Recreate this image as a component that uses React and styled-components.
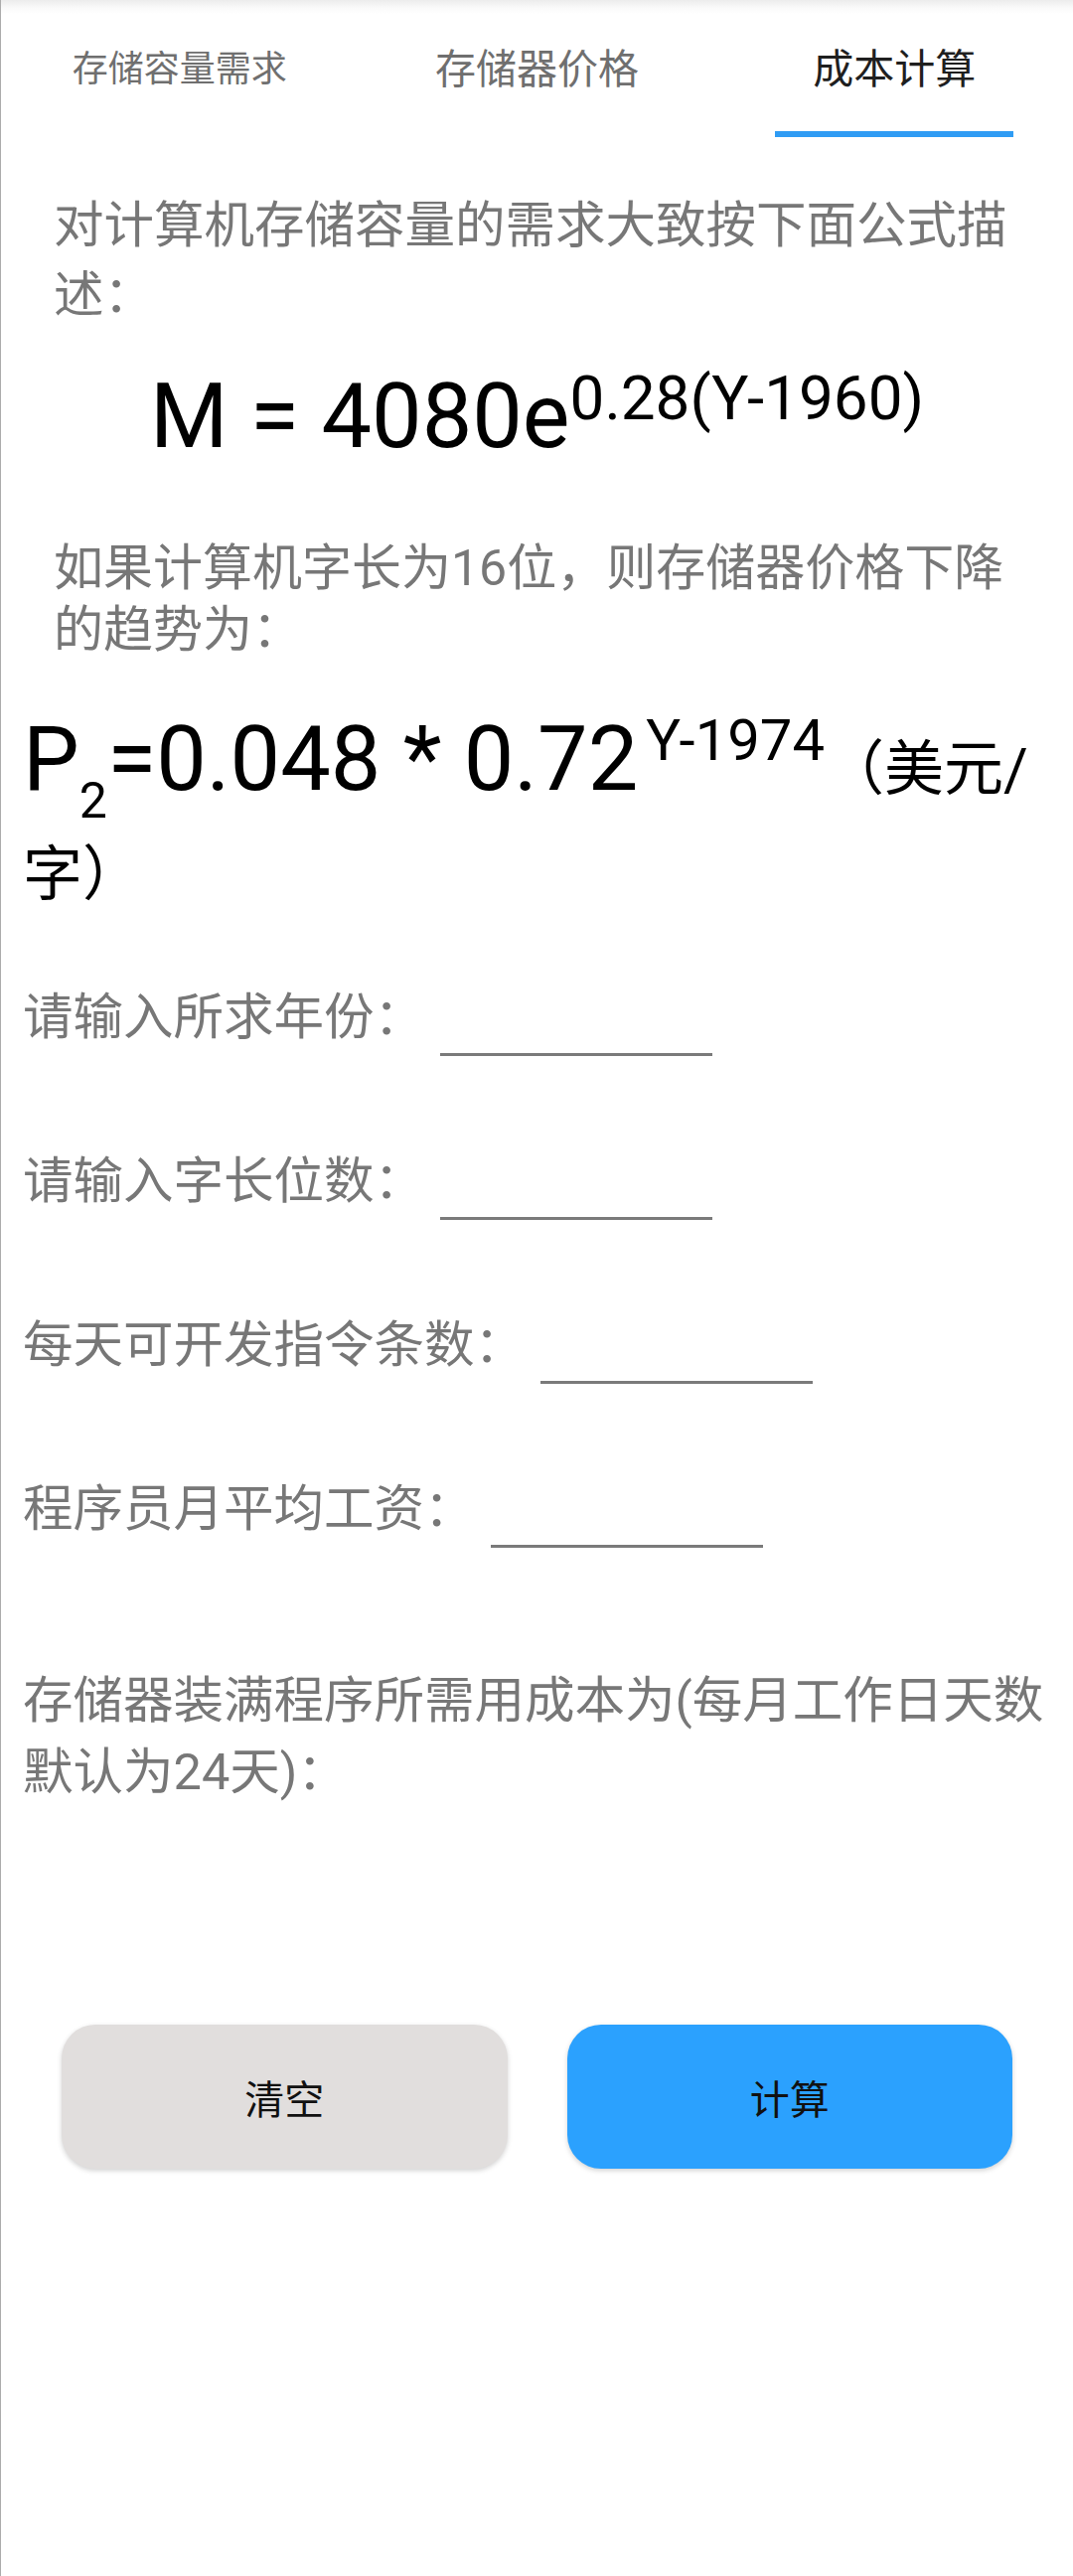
import React from 'react';
import styled, { createGlobalStyle } from 'styled-components';

const GlobalStyle = createGlobalStyle`
  html, body {
    margin: 0;
    padding: 0;
    background: #fff;
  }
  body {
    font-family: Roboto, "Noto Sans CJK SC", sans-serif;
  }
`;

// 页面外框
const Page = styled.div`
  width: 1080px;
  min-height: 2593px;
  box-sizing: border-box;
  border-left: 1px solid #acacac;
  background: #fff;
`;

// 顶部选项卡
const TabBar = styled.div`
  display: grid;
  grid-template-columns: repeat(3, 1fr);
  height: 138px;
  background: linear-gradient(to bottom, #ececec 0, #fafafa 8px, #fff 14px);
`;

const Tab = styled.div`
  display: flex;
  flex-direction: column;
  align-items: center;
`;

const TabLabel = styled.div`
  flex: 1;
  display: flex;
  align-items: center;
  font-size: ${p => p.$size}px;
  color: ${p => (p.$active ? '#1f1f1f' : '#6f6f6f')};
`;

const Indicator = styled.div`
  width: 240px;
  height: 6px;
  background: ${p => (p.$active ? '#2f9cf4' : 'transparent')};
`;

// 说明文字部分
const Intro = styled.div`
  padding: 0 53px;
`;

const Paragraph = styled.p`
  margin: ${p => p.$top}px 0 0;
  font-size: ${p => p.$size}px;
  line-height: ${p => p.$line}px;
  color: #777;
`;

const Formula = styled.div`
  margin-top: 33px;
  text-align: center;
  font-size: 90px;
  line-height: 110px;
  color: #000;
`;

const Sup = styled.span`
  font-size: ${p => p.$size}px;
  vertical-align: ${p => p.$shift}px;
  margin-left: ${p => p.$gap || 0}px;
  line-height: 0;
`;

// 下半部分
const Lower = styled.div`
  padding: 0 20px 0 22px;
`;

const PriceFormula = styled.div`
  margin-top: 47px;
  font-size: 60px;
  line-height: 106px;
  color: #000;
`;

const Big = styled.span`
  font-size: 90px;
`;

const Fields = styled.div`
  margin-top: 60px;
  display: flex;
  flex-direction: column;
  gap: 96px;
`;

const Row = styled.div`
  display: flex;
  align-items: flex-start;
  gap: 16px;
`;

const Label = styled.span`
  font-size: 50.5px;
  line-height: 60px;
  color: #777;
  white-space: nowrap;
`;

const Input = styled.input`
  width: 274px;
  height: 69px;
  box-sizing: border-box;
  border: none;
  border-bottom: 3px solid #7a7a7a;
  background: transparent;
  outline: none;
  font-size: 50px;
  font-family: inherit;
  padding: 0 8px;
`;

const ButtonRow = styled.div`
  margin-top: 218px;
  padding: 0 61px;
  display: flex;
  gap: 60px;
`;

const Button = styled.button`
  flex: 1;
  height: 145px;
  border: none;
  border-radius: 34px;
  background: ${p => (p.$primary ? '#2ba1fe' : '#e1dedd')};
  box-shadow: 0 2px 5px rgba(0, 0, 0, 0.18);
  font-family: Roboto, "Noto Sans CJK SC", sans-serif;
  font-size: 40px;
  color: #111;
`;

const tabs = [
  { label: '存储容量需求', size: 36 },
  { label: '存储器价格', size: 41 },
  { label: '成本计算', size: 41, active: true },
];

const fields = ['请输入所求年份：', '请输入字长位数：', '每天可开发指令条数：', '程序员月平均工资：'];

export default function App() {
  return (
    <>
      <GlobalStyle />
      <Page>
        <TabBar>
          {tabs.map(t => (
            <Tab key={t.label}>
              <TabLabel $size={t.size} $active={t.active}>{t.label}</TabLabel>
              <Indicator $active={t.active} />
            </Tab>
          ))}
        </TabBar>

        <Intro>
          <Paragraph $top={54} $size={50.5} $line={70}>
            对计算机存储容量的需求大致按下面公式描述：
          </Paragraph>
          <Formula>
            M = 4080e<Sup $size={62} $shift={28}>0.28(Y-1960)</Sup>
          </Formula>
          <Paragraph $top={66} $size={50} $line={62}>
            如果计算机字长为16位，则存储器价格下降的趋势为：
          </Paragraph>
        </Intro>

        <Lower>
          <PriceFormula>
            <Big>P</Big>
            <Sup $size={50} $shift={-28}>2</Sup>
            <Big>=0.048 * 0.72</Big>
            <Sup $size={58} $shift={30} $gap={8}>Y-1974</Sup>
            （美元/<wbr />字）
          </PriceFormula>

          <Fields>
            {fields.map(f => (
              <Row key={f}>
                <Label>{f}</Label>
                <Input />
              </Row>
            ))}
          </Fields>

          <Paragraph $top={118} $size={50.5} $line={72}>
            存储器装满程序所需用成本为(每月工作日天数默认为24天)：
          </Paragraph>
        </Lower>

        <ButtonRow>
          <Button>清空</Button>
          <Button $primary>计算</Button>
        </ButtonRow>
      </Page>
    </>
  );
}
